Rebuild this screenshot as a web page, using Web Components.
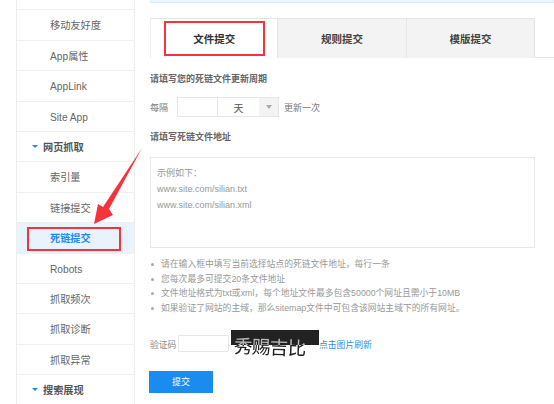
<!DOCTYPE html>
<html><head><meta charset="utf-8">
<style>
html,body{margin:0;padding:0;background:#fff;overflow:hidden;height:404px;font-family:"Liberation Sans","Noto Sans CJK SC",sans-serif}
.page{display:flex;align-items:flex-start;height:404px;overflow:hidden;position:relative}
</style></head><body>
<div class="page">
<side-nav>
  <nav-item>移动适配</nav-item>
  <nav-item>移动友好度</nav-item>
  <nav-item>App属性</nav-item>
  <nav-item>AppLink</nav-item>
  <nav-item>Site App</nav-item>
  <nav-head>网页抓取</nav-head>
  <nav-item>索引量</nav-item>
  <nav-item>链接提交</nav-item>
  <nav-item active marked>死链提交</nav-item>
  <nav-item>Robots</nav-item>
  <nav-item>抓取频次</nav-item>
  <nav-item>抓取诊断</nav-item>
  <nav-item>抓取异常</nav-item>
  <nav-head>搜索展现</nav-head>
</side-nav>
<main-panel>
  <tab-bar>
    <tab-item active marked>文件提交</tab-item>
    <tab-item>规则提交</tab-item>
    <tab-item>模版提交</tab-item>
  </tab-bar>
  <form-title style="margin-top:15px">请填写您的死链文件更新周期</form-title>
  <cycle-row></cycle-row>
  <form-title style="margin-top:14px">请填写死链文件地址</form-title>
  <url-box></url-box>
  <tip-list></tip-list>
  <captcha-row></captcha-row>
  <submit-button>提交</submit-button>
</main-panel>
<red-arrow></red-arrow>
</div>
<script>
function def(name, html){
  customElements.define(name, class extends HTMLElement{
    constructor(){super();this.attachShadow({mode:'open'}).innerHTML=html;}
  });
}
def('side-nav',`<style>:host{display:block;flex:none;width:119px;margin:-20px 0 0 16px;border-left:1px solid #eee;border-right:1px solid #eee;box-sizing:border-box}</style><slot></slot>`);
def('nav-item',`<style>
:host{display:block;position:relative;box-sizing:border-box;height:30.4px;border-bottom:1px solid #f0f0f0;color:#666;font-size:10.2px;line-height:31px;padding-left:33px;white-space:nowrap}
:host([active]){background:#e8f3fd;color:#1a8cf0;font-weight:bold;border-bottom-color:#e8f3fd}
.mark{display:none;position:absolute;left:10px;top:4px;width:94px;height:24px;box-sizing:border-box;border:2px solid #f5333a}
:host([marked]) .mark{display:block}
</style><slot></slot><span class="mark"></span>`);
def('nav-head',`<style>
:host{display:flex;align-items:center;box-sizing:border-box;height:30.4px;padding-bottom:1px;border-bottom:1px solid #f0f0f0;color:#555;font-size:10.2px;font-weight:bold;padding-left:15px;white-space:nowrap}
i{width:0;height:0;border:3px solid transparent;border-top:3px solid #1a8cf0;border-bottom:0;margin-right:5px}
</style><i></i><slot></slot>`);
def('main-panel',`<style>
:host{display:block;flex:none;width:404px;margin-left:15px;box-sizing:border-box;padding-right:19px}
.banner{height:3px;margin-right:-19px;background:#eef7fe;border:1px solid #d9edfb;border-top:0;box-sizing:border-box;margin-bottom:15px}
</style><div class="banner"></div><slot></slot>`);
def('tab-bar',`<style>
:host{display:flex;height:40px;box-sizing:border-box;margin-right:-19px;border-bottom:1px solid #e6e6e6}
</style><slot></slot>`);
def('tab-item',`<style>
:host{display:flex;align-items:center;justify-content:center;position:relative;box-sizing:border-box;width:128.4px;height:40px;background:#f3f3f3;border:1px solid #e6e6e6;border-left:0;border-bottom:0;font-size:10.5px;color:#444;font-weight:bold}
:host([active]){background:#fff;border-left:1px solid #eee;margin-bottom:-1px;height:40px;border-bottom:0;color:#333}
.mark{display:none;position:absolute;left:13px;top:2px;width:101px;height:35px;box-sizing:border-box;border:2px solid #f5333a}
:host([marked]) .mark{display:block}
</style><slot></slot><span class="mark"></span>`);
def('form-title',`<style>:host{display:block;font-size:9px;line-height:12px;font-weight:bold;color:#666}</style><slot></slot>`);
def('cycle-row',`<style>
:host{display:flex;align-items:center;height:20px;margin-top:12px;font-size:9px;color:#777}
.l{width:27px}
.box{display:flex;height:20px;width:102px;box-sizing:border-box;border:1px solid #e6e6e6}
.a{width:39px;border-right:1px solid #e6e6e6}
.b{flex:1;display:flex;align-items:center;justify-content:center;font-size:10px;color:#555}
.c{width:19px;background:#f3f3f3;display:flex;align-items:center;justify-content:center}
.c i{width:0;height:0;border:3px solid transparent;border-top:4px solid #aaa;border-bottom:0}
.r{margin-left:5px}
</style><span class="l">每隔</span><div class="box"><div class="a"></div><div class="b">天</div><div class="c"><i></i></div></div><span class="r">更新一次</span>`);
def('url-box',`<style>
:host{display:block;box-sizing:border-box;height:91px;margin-top:14px;border:1px solid #e8e8e8;padding:7px 6px;font-size:9px;line-height:16px;color:#999}
</style><div>示例如下：</div><div>www.site.com/silian.txt</div><div>www.site.com/silian.xml</div>`);
def('tip-list',`<style>
:host{display:block;margin-top:9px}
ul{margin:0;padding:0;list-style:none;font-size:8.8px;line-height:14.7px;color:#999}
li{position:relative;padding-left:11px;white-space:nowrap}
li::before{content:"";position:absolute;left:1px;top:6px;width:3px;height:3px;border-radius:50%;background:#aaa}
</style><ul>
<li>请在输入框中填写当前选择站点的死链文件地址，每行一条</li>
<li>您每次最多可提交20条文件地址</li>
<li>文件地址格式为txt或xml，每个地址文件最多包含50000个网址且需小于10MB</li>
<li>如果验证了网站的主域，那么sitemap文件中可包含该网站主域下的所有网址。</li></ul>`);
def('captcha-row',`<style>
:host{display:flex;align-items:flex-start;margin-top:14px;height:30px;font-size:8.8px;color:#888}
.l{width:28px;margin-top:9px;line-height:12px}
.in{width:51px;height:17px;box-sizing:border-box;border:1px solid #e6e6e6;border-radius:1px;margin-top:5px}
.img{isolation:isolate;display:flex;flex:none;width:88px;height:30px;padding-left:3px;box-sizing:border-box;margin-left:2px;overflow:hidden;background:linear-gradient(#222 0 15px,#fff 15px)}
.img span{display:block;font:18.5px/30px "Noto Sans CJK SC",sans-serif;letter-spacing:-.6px;white-space:nowrap;color:#ddd;mix-blend-mode:difference;transform:translateY(1px) rotate(2deg)}
a{color:#2d8fe8;margin-top:9px;line-height:12px;white-space:nowrap;text-decoration:none}
</style><span class="l">验证码</span><div class="in"></div><div class="img"><span>秀赐吉比</span></div><a>点击图片刷新</a>`);
def('submit-button',`<style>
:host{display:flex;align-items:center;justify-content:center;width:64px;height:22px;margin:11px 0 0 -1px;background:#1a8cf0;color:#fff;font-size:9px}
</style><slot></slot>`);
def('red-arrow',`<style>:host{position:absolute;left:0;top:0;width:554px;height:404px;pointer-events:none;display:block}svg{display:block}</style>
<svg width="554" height="404" viewBox="0 0 554 404"><path d="M142 148 L109 209 L113 215 L94 224 L98 204 L103 207 Z" fill="#f5333a"/></svg>`);
</script>
</body></html>
